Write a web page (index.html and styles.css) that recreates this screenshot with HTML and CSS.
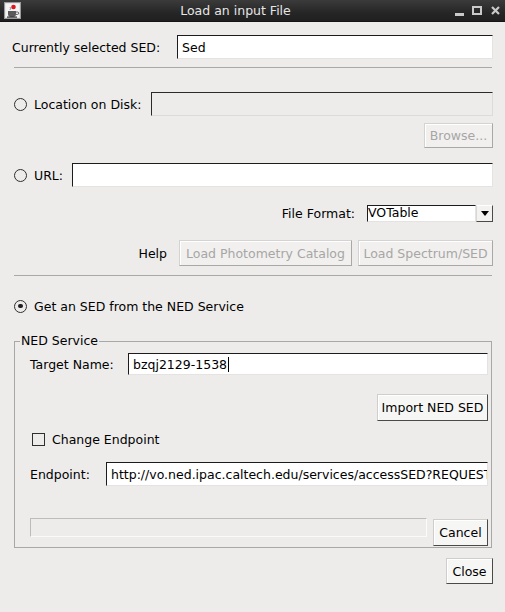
FILE: index.html
```html
<!DOCTYPE html>
<html>
<head>
<meta charset="utf-8">
<link rel="stylesheet" href="styles.css">
</head>
<body>
<div class="window">
  <div class="titlebar">
    <div class="ticon">
      <svg width="17" height="17" viewBox="0 0 17 17">
        <rect x="0.5" y="0.5" width="16" height="16" fill="#d8d8d8" stroke="#9a9a9a"/>
        <rect x="1.5" y="1.5" width="14" height="14" fill="#f4f4f4"/>
        <path d="M4 9 h8 v3 a3 3 0 0 1 -3 3 h-2 a3 3 0 0 1 -3 -3 z" fill="#5a5a5a"/>
        <path d="M12 10 h1.5 a1.2 1.2 0 0 1 0 2.4 h-1.5" fill="none" stroke="#5a5a5a" stroke-width="1"/>
        <rect x="3" y="14.5" width="10" height="1.2" fill="#333"/>
        <circle cx="9.5" cy="5" r="2.3" fill="#e0141e"/>
        <path d="M6 8 q1 -2 0 -3" fill="none" stroke="#777" stroke-width="0.8"/>
      </svg>
    </div>
    <div class="ttext">Load an input File</div>
    <div class="tctrls">
      <span class="tmin"></span>
      <span class="tmax"></span>
      <svg class="tclose" width="9" height="9" viewBox="0 0 9 9"><path d="M1 1 L8 8 M8 1 L1 8" stroke="#c9c9c9" stroke-width="2.2"/></svg>
    </div>
  </div>

  <div class="content">
    <div class="row sed-row">
      <span class="lbl lbl-sed">Currently selected SED:</span>
      <div class="field">Sed</div>
    </div>
    <div class="sep"></div>

    <div class="row disk-row">
      <span class="radio"></span>
      <span class="lbl lbl-disk">Location on Disk:</span>
      <div class="field disabled"></div>
    </div>
    <div class="row end browse-row">
      <button class="btn dis browse">Browse...</button>
    </div>

    <div class="row url-row">
      <span class="radio"></span>
      <span class="lbl lbl-url">URL:</span>
      <div class="field"></div>
    </div>

    <div class="row end format-row">
      <span class="lbl lbl-format">File Format:</span>
      <div class="combo">
        <div class="combo-text">VOTable</div>
        <div class="combo-btn"><span class="arrow"></span></div>
      </div>
    </div>

    <div class="row end help-row">
      <span class="lbl lbl-help">Help</span>
      <button class="btn dis photo">Load Photometry Catalog</button>
      <button class="btn dis spec">Load Spectrum/SED</button>
    </div>
    <div class="sep sep2"></div>

    <div class="row ned-row">
      <span class="radio on"></span>
      <span class="lbl">Get an SED from the NED Service</span>
    </div>

    <fieldset class="group">
      <legend>NED Service</legend>
      <div class="row target-row">
        <span class="lbl lbl-target">Target Name:</span>
        <div class="field f22">bzqj2129-1538<span class="caret"></span></div>
      </div>
      <div class="row end import-row">
        <button class="btn import">Import NED SED</button>
      </div>
      <div class="row check-row">
        <span class="check"></span>
        <span class="lbl">Change Endpoint</span>
      </div>
      <div class="row endpoint-row">
        <span class="lbl lbl-endpoint">Endpoint:</span>
        <div class="field clip">http://vo.ned.ipac.caltech.edu/services/accessSED?REQUEST=getData&amp;TARGETNAME=:targetName</div>
      </div>
      <div class="row progress-row">
        <div class="progress"></div>
        <button class="btn cancel">Cancel</button>
      </div>
    </fieldset>

    <div class="row end close-row">
      <button class="btn close">Close</button>
    </div>
  </div>
</div>
</body>
</html>
```

FILE: styles.css
```css
* { box-sizing: border-box; }
html, body { margin: 0; padding: 0; }
body {
  font-family: "DejaVu Sans", "Noto Sans", sans-serif;
  font-size: 12.5px;
  color: #000;
  background: #edeceb;
}
.window {
  width: 505px;
  height: 612px;
  background: #edeceb;
  display: flex;
  flex-direction: column;
  overflow: hidden;
}

/* title bar */
.titlebar {
  height: 22px;
  flex: none;
  display: flex;
  align-items: center;
  background: linear-gradient(#3b3b3b, #262626 60%, #1f1f1f);
  border-bottom: 1px solid #151515;
}
.ticon { width: 24px; display: flex; justify-content: flex-end; padding-right: 3px; }
.ticon svg { display: block; }
.ttext {
  flex: 1;
  text-align: center;
  color: #e6e6e6;
  font-size: 12.5px;
  line-height: 22px;
  padding-right: 3px;
}
.tctrls {
  width: 55px;
  display: flex;
  align-items: center;
  padding-left: 5px;
  height: 22px;
}
.tmin { width: 9px; height: 3px; background: #c9c9c9; margin-top: 8px; margin-left: 0; }
.tmax { width: 10px; height: 9px; border: 2px solid #c9c9c9; margin-left: 8px; }
.tclose { margin-left: 9px; display: block; }

/* content */
.content {
  padding: 0 12px;
  display: flex;
  flex-direction: column;
}
.row { display: flex; align-items: center; }
.row.end { justify-content: flex-end; }
.lbl { white-space: nowrap; line-height: 15px; }

.field {
  flex: 1;
  height: 24px;
  background: #fff;
  border: 1px solid;
  border-color: #1c1c1c #e4e3e2 #e4e3e2 #1c1c1c;
  padding: 0 4px;
  display: flex;
  align-items: center;
  white-space: nowrap;
  overflow: hidden;
}
.field.disabled { background: #edeceb; border-color: #2a2a2a #dcdbda #dcdbda #2a2a2a; }
.field.f22 { height: 22px; }
.caret { display: inline-block; width: 1px; height: 15px; background: #000; margin-left: 1px; }

.sed-row { margin-top: 13px; }
.lbl-sed { width: 165px; }

.sep {
  margin: 8px 1px 0 2px;
  height: 0;
  border-top: 1px solid #a9a8a7;
}
.sep2 { margin-top: 9px; }

.radio {
  width: 13px;
  height: 13px;
  border: 1.3px solid #2f2f2f;
  border-radius: 50%;
  margin-left: 2px;
  margin-right: 7px;
  flex: none;
  position: relative;
  background: transparent;
}
.radio.on::after {
  content: "";
  position: absolute;
  left: 3px; top: 3px;
  width: 4.5px; height: 4.5px;
  border-radius: 50%;
  background: #1e1e1e;
}

.disk-row { margin-top: 24px; }
.lbl-disk { width: 117px; }

.btn {
  font-family: inherit;
  font-size: 12.5px;
  color: #000;
  height: 26px;
  background: #f6f6f5;
  border: 1px solid;
  border-color: #cfcecd #4a4a4a #4a4a4a #cfcecd;
  box-shadow: inset 1px 1px 0 #fff;
  padding: 0 3px;
  margin: 0;
  white-space: nowrap;
  border-radius: 0;
}
.btn.dis {
  color: #a7a6a5;
  background: #f1f0ef;
  border-color: #d4d3d2 #a9a8a7 #a9a8a7 #d4d3d2;
}
.browse-row { margin-top: 7px; }
.browse { width: 69px; height: 25px; }

.url-row { margin-top: 15px; }
.lbl-url { width: 38px; }

.format-row { margin-top: 18px; }
.lbl-format { margin-right: 12px; }
.combo {
  width: 126px;
  height: 17px;
  display: flex;
}
.combo-text {
  flex: 1;
  background: #fff;
  border: 1px solid;
  border-color: #1c1c1c #e4e3e2 #e4e3e2 #1c1c1c;
  line-height: 14px;
  padding-left: 0;
}
.combo-btn {
  width: 17px;
  background: #f3f2f1;
  border: 1px solid;
  border-color: #fff #4a4a4a #4a4a4a #d8d7d6;
  display: flex;
  align-items: center;
  justify-content: center;
}
.arrow {
  width: 0; height: 0;
  border-left: 4px solid transparent;
  border-right: 4px solid transparent;
  border-top: 5px solid #000;
}

.help-row { margin-top: 18px; }
.lbl-help { margin-right: 12px; }
.photo { width: 173px; }
.spec { width: 135px; margin-left: 6px; }

.ned-row { margin-top: 22px; height: 16px; }

.group {
  margin: 20px 1px 0 2px;
  padding: 0 3px 1px 15px;
  border: 1px solid #a9a8a7;
  min-width: 0;
}
.group legend {
  padding: 0 1px;
  margin-left: -10px;
  line-height: 14px;
  font-size: 12.5px;
}
.target-row { margin-top: 5px; }
.lbl-target { width: 98px; }
.import-row { margin-top: 19px; }
.import { height: 27px; width: 111px; }
.check-row { margin-top: 10px; height: 16px; }
.check {
  width: 13px; height: 13px;
  border: 1.3px solid #2f2f2f;
  margin-left: 2px;
  margin-right: 7px;
  flex: none;
}
.endpoint-row { margin-top: 15px; }
.lbl-endpoint { width: 76px; }
.field.clip { padding-left: 4px; }
.progress-row { margin-top: 32px; align-items: flex-start; }
.progress {
  flex: 1;
  height: 19px;
  border: 1px solid #c4c3c2;
  border-color: #bdbcbb #fafafa #fafafa #bdbcbb;
  background: #edeceb;
  margin-right: 6px;
}
.cancel { height: 27px; width: 55px; margin-top: 1px; }

.close-row { margin-top: 10px; }
.close { width: 47px; height: 26px; }
```
